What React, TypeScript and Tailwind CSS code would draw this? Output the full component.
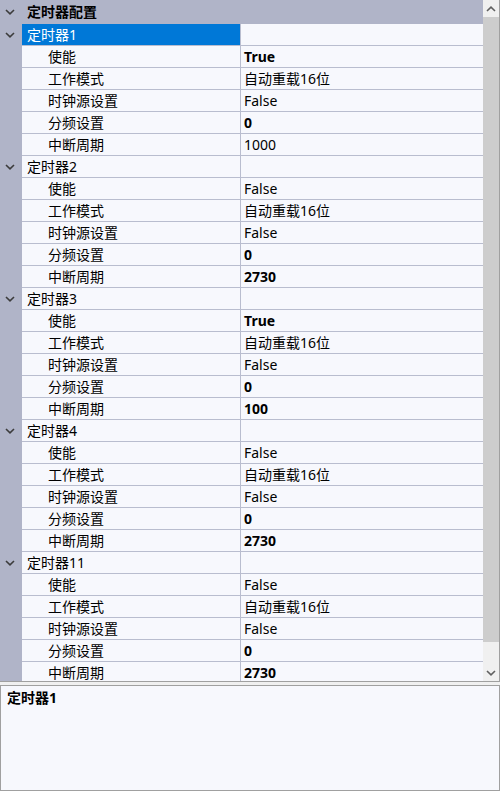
import React from "react";

type Row = { name: string; value: string; bold?: boolean };
type Group = { title: string; rows: Row[] };

const groups: Group[] = [
  {
    title: "定时器1",
    rows: [
      { name: "使能", value: "True", bold: true },
      { name: "工作模式", value: "自动重载16位" },
      { name: "时钟源设置", value: "False" },
      { name: "分频设置", value: "0", bold: true },
      { name: "中断周期", value: "1000" },
    ],
  },
  {
    title: "定时器2",
    rows: [
      { name: "使能", value: "False" },
      { name: "工作模式", value: "自动重载16位" },
      { name: "时钟源设置", value: "False" },
      { name: "分频设置", value: "0", bold: true },
      { name: "中断周期", value: "2730", bold: true },
    ],
  },
  {
    title: "定时器3",
    rows: [
      { name: "使能", value: "True", bold: true },
      { name: "工作模式", value: "自动重载16位" },
      { name: "时钟源设置", value: "False" },
      { name: "分频设置", value: "0", bold: true },
      { name: "中断周期", value: "100", bold: true },
    ],
  },
  {
    title: "定时器4",
    rows: [
      { name: "使能", value: "False" },
      { name: "工作模式", value: "自动重载16位" },
      { name: "时钟源设置", value: "False" },
      { name: "分频设置", value: "0", bold: true },
      { name: "中断周期", value: "2730", bold: true },
    ],
  },
  {
    title: "定时器11",
    rows: [
      { name: "使能", value: "False" },
      { name: "工作模式", value: "自动重载16位" },
      { name: "时钟源设置", value: "False" },
      { name: "分频设置", value: "0", bold: true },
      { name: "中断周期", value: "2730", bold: true },
    ],
  },
];

function Chevron({ up = false, color = "#3c3c3c" }: { up?: boolean; color?: string }) {
  return (
    <svg width="10" height="6" viewBox="0 0 10 6" className="block">
      <polyline
        points={up ? "1,5 5,1.2 9,5" : "1,1 5,4.8 9,1"}
        fill="none"
        stroke={color}
        strokeWidth="1.6"
      />
    </svg>
  );
}

function GroupRow({ title, selected }: { title: string; selected?: boolean }) {
  return (
    <div className="flex h-[22px] shrink-0">
      <div className="flex w-[22px] shrink-0 items-center justify-center bg-[#b0b4c8] pr-[2px]">
        <Chevron />
      </div>
      <div
        className={
          selected
            ? "flex w-[218px] shrink-0 items-center border-b border-[#b9bdcf] bg-[#0078d7] pl-[5px] text-white"
            : "flex w-[218px] shrink-0 items-center border-b border-[#b9bdcf] bg-[#f7f8fd] pl-[5px] text-black"
        }
      >
        {title}
      </div>
      <div className="flex-1 border-b border-l border-[#b9bdcf] bg-[#f7f8fd]" />
    </div>
  );
}

function PropRow({ row }: { row: Row }) {
  return (
    <div className="flex h-[22px] shrink-0">
      <div className="w-[22px] shrink-0 bg-[#b0b4c8]" />
      <div className="flex w-[218px] shrink-0 items-center border-b border-[#b9bdcf] bg-[#f7f8fd] pl-[26px] text-black">
        {row.name}
      </div>
      <div
        className={
          row.bold
            ? "flex flex-1 items-center border-b border-l border-[#b9bdcf] bg-[#f7f8fd] pl-[3px] font-bold text-black"
            : "flex flex-1 items-center border-b border-l border-[#b9bdcf] bg-[#f7f8fd] pl-[3px] text-black"
        }
      >
        {row.value}
      </div>
    </div>
  );
}

export default function App() {
  return (
    <div
      className="flex h-[791px] w-[500px] flex-col overflow-hidden bg-[#f0f0f0] text-[14px] leading-none"
      style={{ fontFamily: '"Noto Sans", "Noto Sans CJK SC", sans-serif' }}
    >
      <div className="flex h-[682px] shrink-0 border-b border-r border-[#a0a0a0]">
        <div className="flex flex-1 flex-col overflow-hidden">
          <div className="flex h-[24px] shrink-0 bg-[#b0b4c8]">
            <div className="flex w-[22px] shrink-0 items-center justify-center pr-[2px]">
              <Chevron />
            </div>
            <div className="flex items-center pl-[5px] font-bold text-black">定时器配置</div>
          </div>
          {groups.map((g, gi) => (
            <React.Fragment key={g.title}>
              <GroupRow title={g.title} selected={gi === 0} />
              {g.rows.map((r) => (
                <PropRow key={g.title + r.name} row={r} />
              ))}
            </React.Fragment>
          ))}
        </div>
        <div className="flex w-[16px] shrink-0 flex-col bg-[#f0f0f0]">
          <div className="flex h-[17px] shrink-0 items-center justify-center">
            <Chevron up color="#606060" />
          </div>
          <div className="h-[625px] shrink-0 bg-[#cdcdcd]" />
          <div className="flex-1" />
          <div className="flex h-[17px] shrink-0 items-center justify-center">
            <Chevron color="#606060" />
          </div>
        </div>
      </div>
      <div className="h-[3px] shrink-0 bg-[#f0f0f0]" />
      <div className="flex-1 border border-[#a0a0a0] bg-[#f7f8fd] px-[6px] pt-[5px]">
        <div className="font-bold text-black">定时器1</div>
      </div>
    </div>
  );
}
